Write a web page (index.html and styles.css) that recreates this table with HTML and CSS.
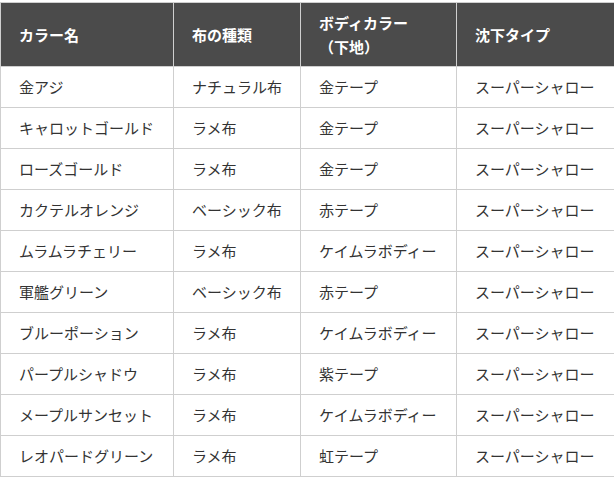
FILE: index.html
```html
<!DOCTYPE html>
<html lang="ja">
<head>
<meta charset="utf-8">
<link rel="stylesheet" href="styles.css">
</head>
<body>
<table class="spec">
  <colgroup>
    <col class="c1"><col class="c2"><col class="c3"><col class="c4">
  </colgroup>
  <thead>
    <tr><th>カラー名</th><th>布の種類</th><th>ボディカラー<br>（下地）</th><th>沈下タイプ</th></tr>
  </thead>
  <tbody>
    <tr><td>金アジ</td><td>ナチュラル布</td><td>金テープ</td><td>スーパーシャロー</td></tr>
    <tr><td>キャロットゴールド</td><td>ラメ布</td><td>金テープ</td><td>スーパーシャロー</td></tr>
    <tr><td>ローズゴールド</td><td>ラメ布</td><td>金テープ</td><td>スーパーシャロー</td></tr>
    <tr><td>カクテルオレンジ</td><td>ベーシック布</td><td>赤テープ</td><td>スーパーシャロー</td></tr>
    <tr><td>ムラムラチェリー</td><td>ラメ布</td><td>ケイムラボディー</td><td>スーパーシャロー</td></tr>
    <tr><td>軍艦グリーン</td><td>ベーシック布</td><td>赤テープ</td><td>スーパーシャロー</td></tr>
    <tr><td>ブルーポーション</td><td>ラメ布</td><td>ケイムラボディー</td><td>スーパーシャロー</td></tr>
    <tr><td>パープルシャドウ</td><td>ラメ布</td><td>紫テープ</td><td>スーパーシャロー</td></tr>
    <tr><td>メープルサンセット</td><td>ラメ布</td><td>ケイムラボディー</td><td>スーパーシャロー</td></tr>
    <tr><td>レオパードグリーン</td><td>ラメ布</td><td>虹テープ</td><td>スーパーシャロー</td></tr>
  </tbody>
</table>
</body>
</html>
```
FILE: styles.css
```css
html, body {
  margin: 0;
  padding: 0;
  background: #fff;
}
body {
  padding-top: 2px;
  font-family: "Noto Sans CJK JP", "Noto Sans", sans-serif;
  font-size: 15px;
  color: #333;
}
.spec {
  border-collapse: collapse;
  table-layout: fixed;
  width: 614px;
}
.c1 { width: 173px; }
.c2 { width: 127px; }
.c3 { width: 156px; }
.c4 { width: 158px; }
.spec th, .spec td {
  border: 1px solid #cfcfcf;
  text-align: left;
  vertical-align: middle;
  padding: 0 18px;
  line-height: 24px;
}
.spec th {
  background: #4b4b4b;
  color: #fff;
  font-weight: bold;
  height: 63px;
}
.spec td {
  height: 40px;
  white-space: nowrap;
}
```
